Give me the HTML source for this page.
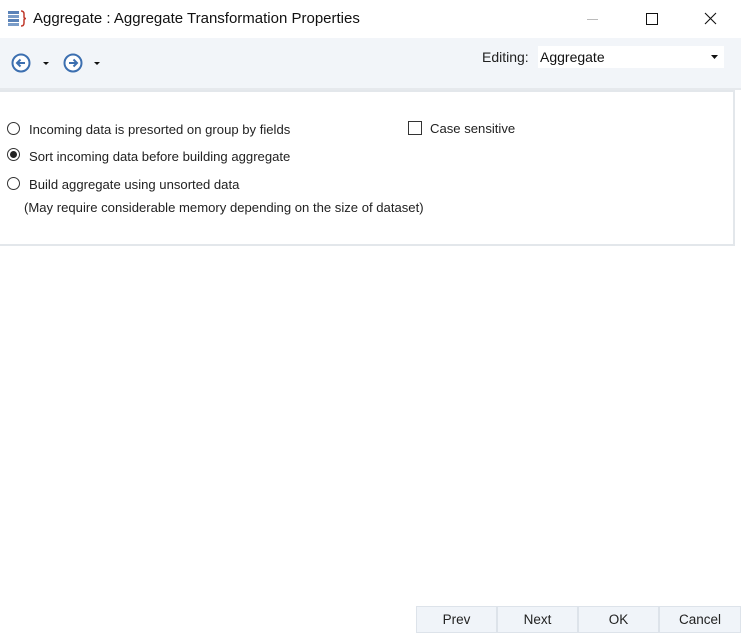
<!DOCTYPE html><html><head><style>
body{margin:0;width:741px;height:634px;background:#fff;font-family:"Liberation Sans",sans-serif;position:relative;overflow:hidden;font-size:13.1px;color:#222}
.a{position:absolute}
.btn{position:absolute;top:606px;height:27px;background:#f0f4f9;border:1px solid #dde3ea;box-sizing:border-box;text-align:center;line-height:25px;font-size:13.5px;color:#222}
.r{position:absolute;width:13px;height:13px;border:1px solid #333;border-radius:50%;box-sizing:border-box;left:7px}
</style></head><body>
<svg class="a" style="left:8px;top:10px" width="20" height="17"><rect x="0" y="1" width="11" height="3" fill="#5a82b8"/><rect x="0" y="5" width="11" height="3" fill="#7a9cc8"/><rect x="0" y="9" width="11" height="3" fill="#5a82b8"/><rect x="0" y="13" width="11" height="3" fill="#7a9cc8"/><path d="M13 1 q3 0 3 3 v3 q0 1.5 2 1.5 q-2 0 -2 1.5 v3 q0 3 -3 3" stroke="#c0392b" stroke-width="1.5" fill="none"/></svg>
<div class="a" style="left:33px;top:10px;font-size:15px;color:#111">Aggregate : Aggregate Transformation Properties</div>
<div class="a" style="left:587px;top:19px;width:11px;height:1px;background:#bbb"></div>
<div class="a" style="left:646px;top:13px;width:10px;height:10px;border:1px solid #111"></div>
<svg class="a" style="left:704px;top:12px" width="13" height="13"><path d="M1 1L12 12M12 1L1 12" stroke="#111" stroke-width="1.1"/></svg>
<div class="a" style="left:0;top:38px;width:741px;height:50px;background:#f2f5f9;border-bottom:2px solid #e6e9ed"></div>
<svg class="a" style="left:11px;top:53px" width="95" height="20"><circle cx="10" cy="10" r="8.5" fill="#fff" stroke="#3c6fb0" stroke-width="2"/><path d="M14 10H6M9.5 6.5L6 10l3.5 3.5" stroke="#3c6fb0" stroke-width="2" fill="none"/><path d="M32 9h6l-3 3z" fill="#111"/><circle cx="62" cy="10" r="8.5" fill="#fff" stroke="#3c6fb0" stroke-width="2"/><path d="M58 10h8M62.5 6.5L66 10l-3.5 3.5" stroke="#3c6fb0" stroke-width="2" fill="none"/><path d="M83 9h6l-3 3z" fill="#111"/></svg>
<div class="a" style="left:482px;top:49px;font-size:14px;color:#222">Editing:</div>
<div class="a" style="left:538px;top:46px;width:186px;height:22px;background:#fff"></div>
<div class="a" style="left:540px;top:49px;font-size:14px;color:#111">Aggregate</div>
<svg class="a" style="left:711px;top:55px" width="8" height="5"><path d="M0 0h7l-3.5 4z" fill="#111"/></svg>
<div class="a" style="left:-2px;top:90px;width:737px;height:156px;border:2px solid #e3e7eb;box-sizing:border-box"></div>
<div class="r" style="top:122px"></div>
<div class="r" style="top:148px"><div style="width:7px;height:7px;background:#222;border-radius:50%;margin:2px"></div></div>
<div class="r" style="top:177px"></div>
<div class="a" style="left:29px;top:122px">Incoming data is presorted on group by fields</div>
<div class="a" style="left:29px;top:149px">Sort incoming data before building aggregate</div>
<div class="a" style="left:29px;top:177px">Build aggregate using unsorted data</div>
<div class="a" style="left:24px;top:200px">(May require considerable memory depending on the size of dataset)</div>
<div class="a" style="left:408px;top:121px;width:14px;height:14px;border:1px solid #333;box-sizing:border-box"></div>
<div class="a" style="left:430px;top:121px">Case sensitive</div>
<div class="btn" style="left:416px;width:81px">Prev</div>
<div class="btn" style="left:497px;width:81px">Next</div>
<div class="btn" style="left:578px;width:81px">OK</div>
<div class="btn" style="left:659px;width:82px">Cancel</div>
</body></html>
